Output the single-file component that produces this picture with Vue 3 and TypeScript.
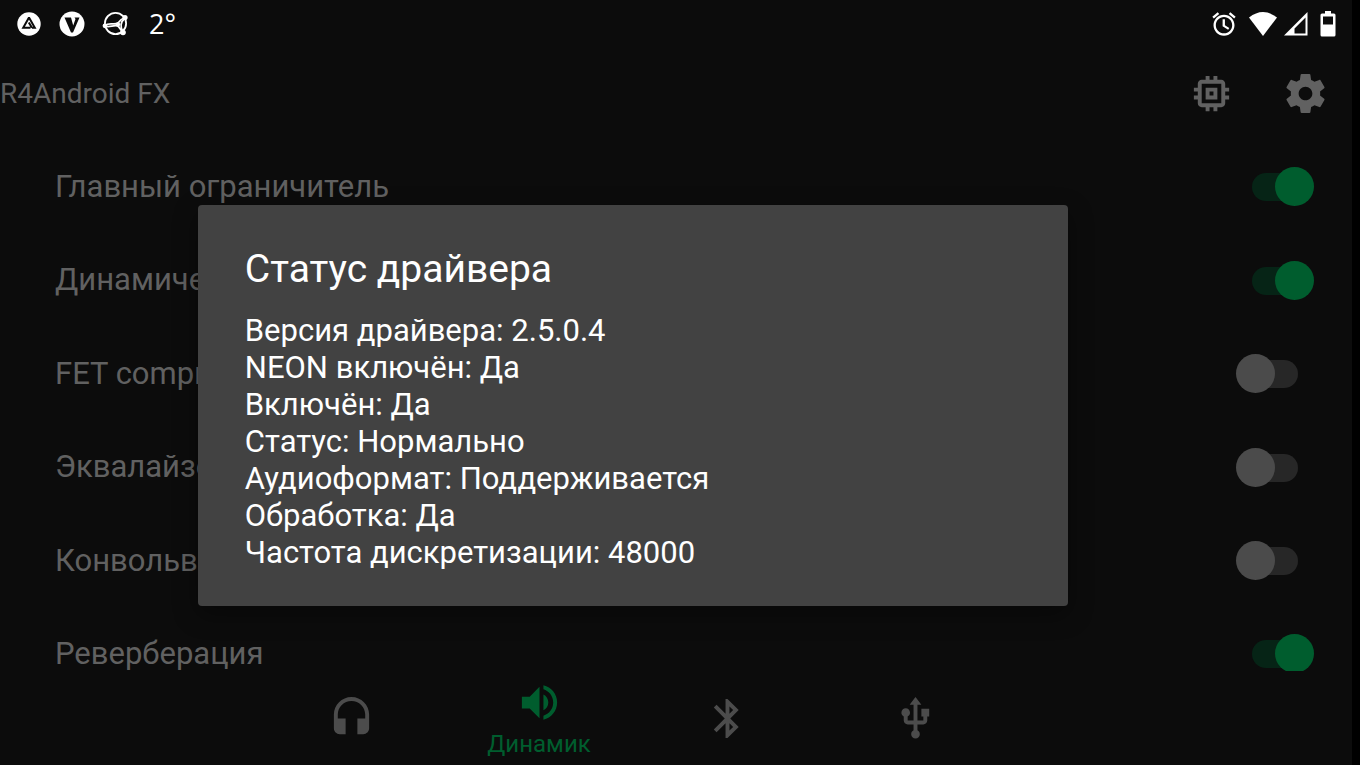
<script setup lang="ts">
import { ref } from 'vue'

interface Effect {
  id: string
  label: string
  on: boolean
}

interface Output {
  id: string
  label: string
  path: string
}

const effects = ref<Effect[]>([
  { id: 'limiter', label: 'Главный ограничитель', on: true },
  { id: 'dynamic', label: 'Динамическая система', on: true },
  { id: 'fet', label: 'FET compressor', on: false },
  { id: 'eq', label: 'Эквалайзер', on: false },
  { id: 'convolver', label: 'Конвольвер', on: false },
  { id: 'reverb', label: 'Реверберация', on: true },
])

const outputs: Output[] = [
  {
    id: 'headphones',
    label: 'Наушники',
    path: 'M12 1c-4.970 0-9 4.030-9 9v7c0 1.660 1.340 3 3 3h3v-8H5v-2c0-3.870 3.130-7 7-7s7 3.130 7 7v2h-4v8h3c1.660 0 3-1.340 3-3v-7c0-4.970-4.030-9-9-9z',
  },
  {
    id: 'speaker',
    label: 'Динамик',
    path: 'M3 9v6h4l5 5V4L7 9H3zm13.500 3c0-1.770-1.020-3.290-2.500-4.030v8.050c1.480-.73 2.500-2.250 2.500-4.020zM14 3.230v2.060c2.890.86 5 3.540 5 6.710s-2.110 5.850-5 6.710v2.060c4.010-.91 7-4.490 7-8.770s-2.990-7.860-7-8.770z',
  },
  {
    id: 'bluetooth',
    label: 'Bluetooth',
    path: 'M17.710 7.710L12 2h-1v7.590L6.410 5 5 6.410 10.590 12 5 17.590 6.410 19 11 14.410V22h1l5.710-5.710-4.300-4.290 4.300-4.290zM13 5.830l1.880 1.880L13 9.590V5.830zm1.880 10.460L13 18.170v-3.760l1.880 1.880z',
  },
  {
    id: 'usb',
    label: 'USB',
    path: 'M15 7v4h1v2h-3V5h2l-3-4-3 4h2v8H8v-2.070c.7-.37 1.200-1.080 1.200-1.930 0-1.210-.99-2.200-2.200-2.200-1.210 0-2.200.99-2.200 2.200 0 .85.5 1.560 1.200 1.930V13c0 1.110.89 2 2 2h3v3.050c-.71.37-1.200 1.100-1.200 1.950 0 1.220.99 2.200 2.200 2.200 1.210 0 2.200-.98 2.200-2.200 0-.85-.49-1.580-1.200-1.950V15h3c1.110 0 2-.89 2-2v-2h1V7h-4z',
  },
]

const activeOutput = ref('speaker')

const driverStatus = [
  'Версия драйвера: 2.5.0.4',
  'NEON включён: Да',
  'Включён: Да',
  'Статус: Нормально',
  'Аудиоформат: Поддерживается',
  'Обработка: Да',
  'Частота дискретизации: 48000',
]
</script>

<template>
  <div class="screen">
    <div class="status-bar">
      <div class="status-left">
        <svg class="status-icon" viewBox="0 0 26 26" aria-hidden="true">
          <circle cx="13" cy="13" r="11.700" fill="#fff" />
          <path d="M13 6.500L18.800 16.800H16M13 6.500L7.200 16.800H14.500M12.800 11.500L16 16.800" fill="none" stroke="#0c0c0c" stroke-width="2" />
        </svg>
        <svg class="status-icon" viewBox="0 0 26 26" aria-hidden="true">
          <circle cx="13" cy="13" r="12.500" fill="#fff" />
          <path d="M5.500 6.500H12L14.200 14.500L16.500 8L15.500 6.500H20.500L14 21.500H12Z" fill="#0c0c0c" />
        </svg>
        <svg class="status-icon" viewBox="0 0 26 26" fill="none" stroke="#fff" aria-hidden="true">
          <circle cx="13.500" cy="12.500" r="10.600" stroke-width="1.800" />
          <path d="M3 14.500C7 11 13 14.500 16 12C18 9.500 20 7.500 23 6.500M3 15C7 17 12 13.500 16 15C18 17 19 19.500 21 21.500" stroke-width="1.800" />
          <path d="M23 7C18.500 11 18 16 21 21" stroke-width="1.800" />
          <circle cx="3" cy="14.800" r="2.400" fill="#fff" stroke="none" />
          <circle cx="23" cy="6.500" r="2.600" fill="#fff" stroke="none" />
          <circle cx="21" cy="21.500" r="2.800" fill="#fff" stroke="none" />
          <circle cx="16" cy="13.500" r="2.200" fill="#fff" stroke="none" />
        </svg>
        <span class="temperature">2°</span>
      </div>
      <div class="status-right">
        <svg class="alarm" viewBox="0 0 24 24" fill="#fff" aria-hidden="true">
          <path d="M22 5.720l-4.600-3.860-1.290 1.530 4.600 3.860L22 5.720zM7.880 3.390L6.600 1.860 2 5.710l1.290 1.530 4.590-3.850zM12.800 8H10.800v6l4.750 2.850.95-1.430-3.700-2.270V8zM12 4c-4.970 0-9 4.030-9 9s4.020 9 9 9c4.970 0 9-4.030 9-9s-4.030-9-9-9zm0 16c-3.870 0-7-3.130-7-7s3.130-7 7-7 7 3.130 7 7-3.130 7-7 7z" />
        </svg>
        <svg class="wifi" viewBox="0 0 30 26" aria-hidden="true">
          <path d="M1 6.500Q15-4.500 29 6.500L15 25Z" fill="#fff" />
        </svg>
        <svg class="signal" viewBox="0 0 24 24" aria-hidden="true">
          <path d="M0 23.500L23.500 0V23.500ZM10.500 21.500H21.500V5.500L10.500 16.500Z" fill="#fff" fill-rule="evenodd" />
        </svg>
        <svg class="battery" viewBox="0 0 16 26" aria-hidden="true">
          <path d="M5 0H11V2.500H14A1.500 1.500 0 0 1 15.500 4V24A1.500 1.500 0 0 1 14 25.500H2A1.500 1.500 0 0 1 .5 24V4A1.500 1.500 0 0 1 2 2.500H5ZM3 5.500V13.500H13V5.500Z" fill="#fff" fill-rule="evenodd" />
        </svg>
      </div>
    </div>

    <header class="toolbar">
      <h1>R4Android FX</h1>
      <button type="button" class="tool" aria-label="Статус драйвера">
        <svg class="icon" viewBox="0 0 24 24" aria-hidden="true">
          <path d="M15 9H9v6h6V9zm-2 4h-2v-2h2v2zm8-2V9h-2V7c0-1.100-.9-2-2-2h-2V3h-2v2h-2V3H9v2H7c-1.100 0-2 .9-2 2v2H3v2h2v2H3v2h2v2c0 1.100.9 2 2 2h2v2h2v-2h2v2h2v-2h2c1.100 0 2-.9 2-2v-2h2v-2h-2v-2h2zm-4 6H7V7h10v10z" />
        </svg>
      </button>
      <button type="button" class="tool" aria-label="Настройки">
        <svg class="icon" viewBox="0 0 24 24" aria-hidden="true">
          <path d="M19.430 12.980c.04-.32.07-.64.07-.98s-.03-.66-.07-.98l2.110-1.650c.19-.15.24-.42.12-.64l-2-3.460c-.12-.22-.39-.3-.61-.22l-2.490 1c-.52-.4-1.080-.73-1.690-.98l-.38-2.650C14.460 2.180 14.250 2 14 2h-4c-.25 0-.46.18-.49.42l-.38 2.650c-.61.25-1.170.59-1.690.98l-2.490-1c-.23-.09-.49 0-.61.22l-2 3.460c-.13.22-.07.49.12.64l2.110 1.650c-.04.32-.07.65-.07.98s.03.66.07.98l-2.110 1.650c-.19.15-.24.42-.12.64l2 3.460c.12.22.39.3.61.22l2.490-1c.52.4 1.080.73 1.690.98l.38 2.650c.03.24.24.42.49.42h4c.25 0 .46-.18.49-.42l.38-2.650c.61-.25 1.170-.59 1.690-.98l2.490 1c.23.09.49 0 .61-.22l2-3.460c.12-.22.07-.49-.12-.64l-2.110-1.650zM12 15.500c-1.930 0-3.500-1.570-3.500-3.500s1.570-3.500 3.500-3.500 3.500 1.570 3.500 3.500-1.570 3.500-3.500 3.500z" />
        </svg>
      </button>
    </header>

    <main class="effects">
      <div v-for="effect in effects" :key="effect.id" class="effect">
        <label :for="effect.id">{{ effect.label }}</label>
        <input :id="effect.id" v-model="effect.on" type="checkbox" role="switch" class="switch" />
      </div>
    </main>

    <nav class="outputs">
      <button
        v-for="output in outputs"
        :key="output.id"
        type="button"
        class="output"
        :class="{ active: output.id === activeOutput }"
        :aria-label="output.label"
        @click="activeOutput = output.id"
      >
        <svg class="icon" viewBox="0 0 24 24" aria-hidden="true"><path :d="output.path" /></svg>
        <span v-if="output.id === activeOutput">{{ output.label }}</span>
      </button>
    </nav>

    <div class="overlay">
      <section class="dialog" role="dialog" aria-modal="true" aria-labelledby="dialog-title">
        <h2 id="dialog-title">Статус драйвера</h2>
        <p v-for="line in driverStatus" :key="line">{{ line }}</p>
      </section>
    </div>
  </div>
</template>

<style>
body {
  margin: 0;
  background: #000;
}
</style>

<style scoped>
.screen {
  position: relative;
  box-sizing: border-box;
  display: flex;
  flex-direction: column;
  height: 100vh;
  margin-right: 8px;
  overflow: hidden;
  background: #0c0c0c;
  color: #616161;
  font-family: Roboto, "Noto Sans", sans-serif;
}

.status-bar {
  flex: none;
  display: flex;
  align-items: center;
  justify-content: space-between;
  height: 47px;
  padding: 0 16px;
  color: #fff;
}

.status-left {
  display: flex;
  align-items: center;
  gap: 17px;
}

.status-icon {
  width: 26px;
  height: 26px;
}

.temperature {
  padding-left: 4px;
  font-family: "Open Sans", "Noto Sans", sans-serif;
  font-size: 27px;
  line-height: 32px;
}

.status-right {
  display: flex;
  align-items: center;
  gap: 6px;
}

.alarm {
  width: 28px;
  height: 28px;
  margin-right: 4px;
}

.wifi {
  width: 30px;
  height: 26px;
}

.signal {
  width: 24px;
  height: 24px;
}

.battery {
  width: 16px;
  height: 26px;
  margin-left: 6px;
}

.toolbar {
  flex: none;
  display: flex;
  align-items: center;
  height: 93px;
}

.toolbar h1 {
  flex: 1;
  margin: 0;
  font-size: 28px;
  font-weight: 400;
  line-height: 36px;
}

button {
  padding: 0;
  border: 0;
  background: none;
  color: inherit;
  font: inherit;
}

.tool {
  display: grid;
  place-items: center;
  width: 94px;
  height: 93px;
}

.icon {
  width: 47px;
  height: 47px;
  fill: currentColor;
}

.effects {
  flex: 1;
  display: grid;
  grid-auto-rows: 17.6%;
  min-height: 0;
  overflow: hidden;
}

.effect {
  display: flex;
  align-items: center;
  justify-content: space-between;
  padding: 0 38px 0 55px;
  font-size: 31px;
  line-height: 36px;
}

.switch {
  appearance: none;
  position: relative;
  width: 78px;
  height: 39px;
  margin: 0;
}

.switch::before {
  content: "";
  position: absolute;
  inset: 6px 16px 5px;
  border-radius: 14px;
  background: #272727;
}

.switch::after {
  content: "";
  position: absolute;
  top: 0;
  left: 0;
  width: 39px;
  height: 39px;
  border-radius: 50%;
  background: #4b4b4b;
}

.switch:checked::before {
  background: #062416;
}

.switch:checked::after {
  left: 39px;
  background: #005d2e;
}

.outputs {
  flex: none;
  display: flex;
  justify-content: center;
  height: 94px;
  padding-right: 86px;
}

.output {
  display: flex;
  flex-direction: column;
  align-items: center;
  justify-content: center;
  width: 188px;
  color: #4c4c4c;
}

.output.active {
  color: #005d2e;
  font-size: 24px;
  line-height: 36px;
}

.output.active .icon {
  margin-top: 4px;
}

.overlay {
  position: absolute;
  inset: 46px 86px 0 0;
  display: grid;
  place-items: center;
}

.dialog {
  box-sizing: border-box;
  width: 64vw;
  padding: 40px 47px 35px;
  border-radius: 4px;
  background: #424242;
  color: #fff;
  font-size: 31px;
  line-height: 37px;
  box-shadow: 0 8px 24px #0006;
}

.dialog h2 {
  margin: 0 0 19px;
  font-size: 39px;
  font-weight: 400;
  line-height: 48px;
}

.dialog p {
  margin: 0;
}
</style>
